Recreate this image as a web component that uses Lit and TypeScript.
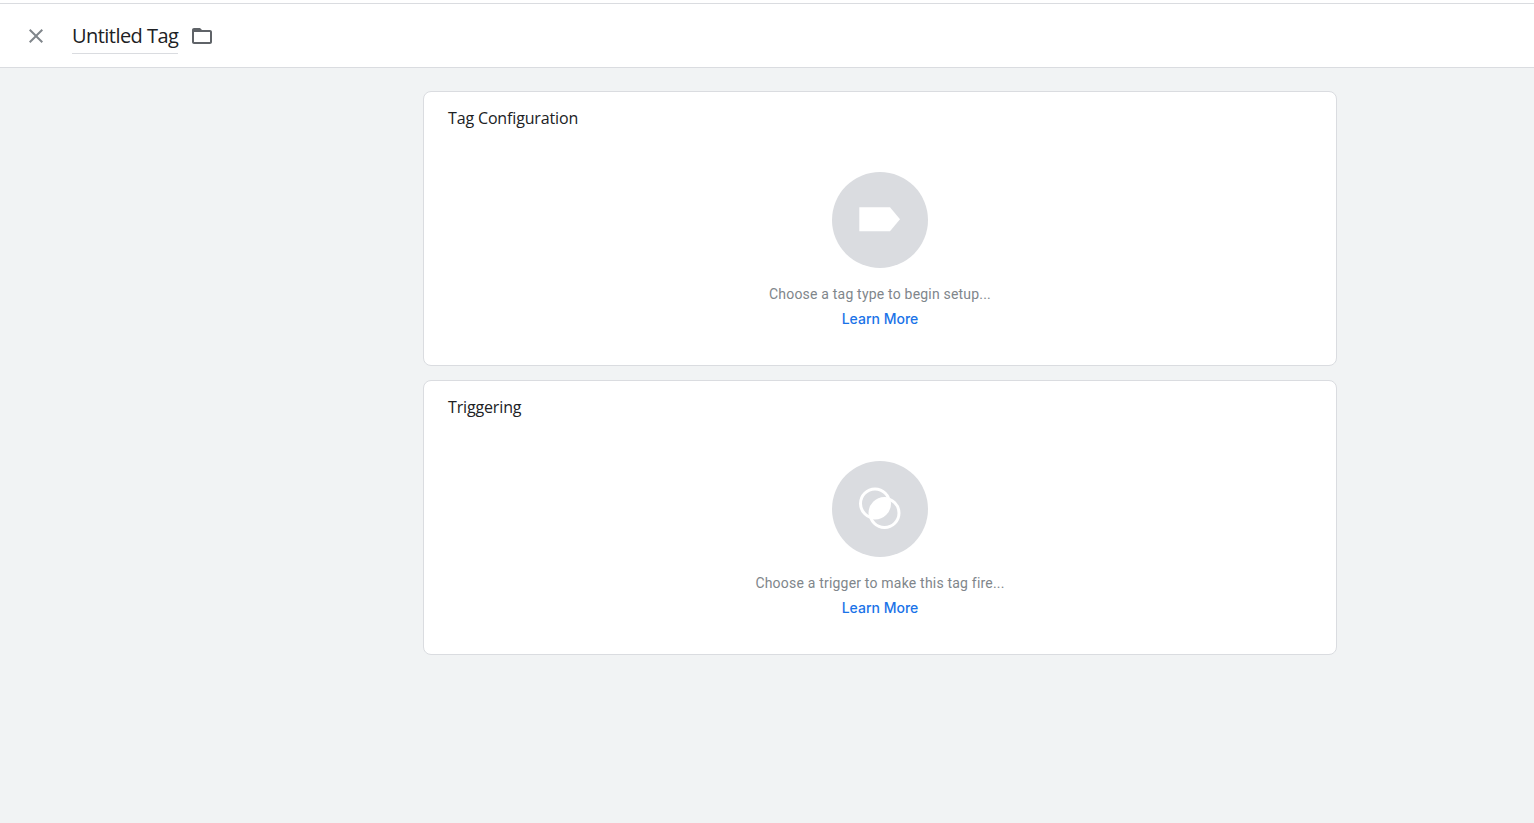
import { LitElement, html, css } from "lit";
import { customElement } from "lit/decorators.js";

@customElement("app-root")
export class AppRoot extends LitElement {
  static styles = css`
    :host { display: block; height: 823px; overflow: hidden; background: #f1f3f4; font-family: Roboto, sans-serif; }
    .top { height: 3px; background: #fff; border-bottom: 1px solid #dadce0; }
    .bar { height: 63px; background: #fff; border-bottom: 1px solid #dadce0; display: flex; align-items: center; padding-left: 24px; }
    .close { width: 24px; height: 24px; display: block; fill: #80868b; margin-top: 1px; }
    .name { margin-left: 24px; font: 400 20px/28px "Open Sans", sans-serif; color: #202124; border-bottom: 1px solid #dadce0; height: 34px; padding-top: 2px; box-sizing: border-box; letter-spacing: -0.55px; display: block; margin-top: 2px; }
    .folder { width: 24px; height: 24px; fill: #5f6368; margin-left: 12px; display: block; }
    .main { display: flex; flex-direction: column; gap: 14px; padding: 23px 197px 0 423px; }
    .card { height: 275px; box-sizing: border-box; background: #fff; border: 1px solid #dadce0; border-radius: 8px; padding: 15px 24px 0; display: flex; flex-direction: column; align-items: center; }
    h2 { margin: 0; align-self: flex-start; font: 400 16px/22px "Open Sans", sans-serif; letter-spacing: -0.15px; color: #202124; }
    .disc { margin-top: 43px; width: 96px; height: 96px; border-radius: 50%; background: #dadce0; display: flex; align-items: center; justify-content: center; }
    .disc svg { width: 48px; height: 48px; display: block; }
    p { margin: 16px 0 0; font: 400 14px/20px Roboto, sans-serif; letter-spacing: 0.2px; color: #80868b; }
    a { margin-top: 5px; font: 500 14px/20px Inter, sans-serif; letter-spacing: 0; color: #1a73e8; text-decoration: none; }
  `;

  render() {
    return html`
      <div class="top"></div>
      <header class="bar">
        <svg class="close" viewBox="0 0 24 24"><path d="M19 6.41 17.59 5 12 10.59 6.41 5 5 6.41 10.59 12 5 17.59 6.41 19 12 13.41 17.59 19 19 17.59 13.41 12z"/></svg>
        <span class="name">Untitled Tag</span>
        <svg class="folder" viewBox="0 0 24 24"><path d="M20 6h-8l-2-2H4c-1.1 0-1.99.9-1.99 2L2 18c0 1.1.9 2 2 2h16c1.1 0 2-.9 2-2V8c0-1.1-.9-2-2-2zm0 12H4V8h16v10z"/></svg>
      </header>
      <main class="main">
        <section class="card">
          <h2>Tag Configuration</h2>
          <div class="disc">
            <svg viewBox="0 0 48 48"><path fill="#fff" d="M3.300 11.300H34L44 23.300 34 35.300H3.300z"/></svg>
          </div>
          <p>Choose a tag type to begin setup...</p>
          <a href="#">Learn More</a>
        </section>
        <section class="card">
          <h2>Triggering</h2>
          <div class="disc">
            <svg viewBox="0 0 48 48">
              <defs><clipPath id="lens"><circle cx="19" cy="18.500" r="14.500"/></clipPath></defs>
              <circle cx="28.500" cy="28" r="14.500" fill="#fff" clip-path="url(#lens)"/>
              <g fill="none" stroke="#fff" stroke-width="3">
                <circle cx="19" cy="18.500" r="14.500"/>
                <circle cx="28.500" cy="28" r="14.500"/>
              </g>
            </svg>
          </div>
          <p>Choose a trigger to make this tag fire...</p>
          <a href="#">Learn More</a>
        </section>
      </main>
    `;
  }
}
